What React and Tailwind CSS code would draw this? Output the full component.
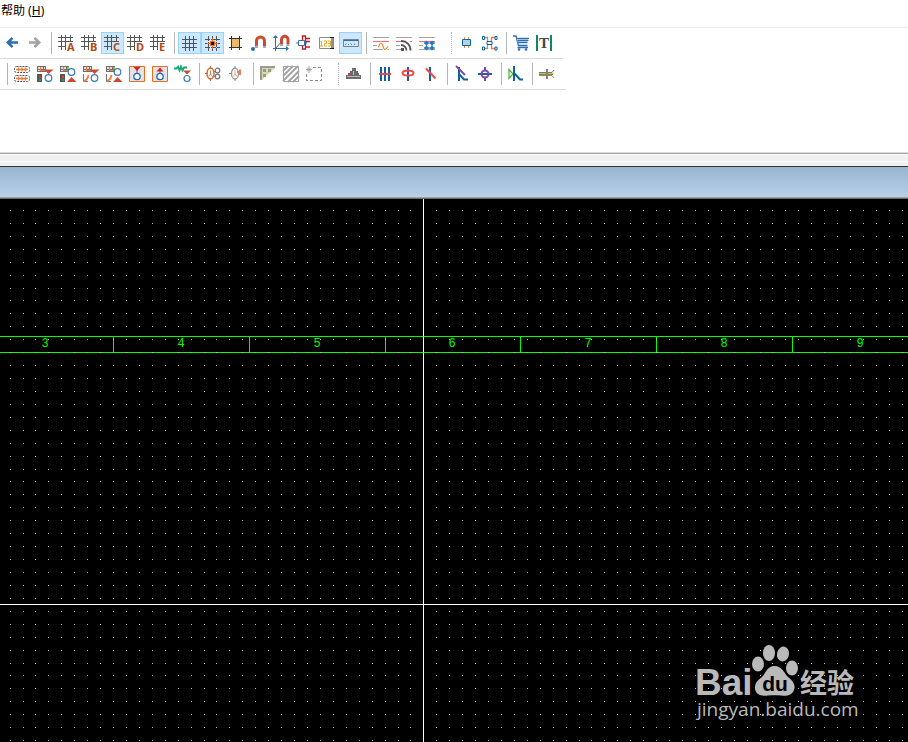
import React, { useState } from 'react';

const BLUE = '#0a62a5';
const RED = '#fb4444';
const BRICK = '#cc4b30';
const GREY = '#a3a3a3';
const ORANGE = '#f47a3a';

const Icon = ({ children }) => (
  <svg width="17" height="16" viewBox="0 0 17 16" fill="none" aria-hidden="true" className="block shrink-0 overflow-visible">
    {children}
  </svg>
);

// arrows
const Back = () => (
  <Icon>
    <path d="M14 7.5H5M8.5 2.8L3.8 7.5L8.5 12.2" stroke="#2f6fb0" strokeWidth="2.6" />
  </Icon>
);

const Forward = () => (
  <Icon>
    <path d="M2 7.5H11M7.5 2.8L12.2 7.5L7.5 12.2" stroke={GREY} strokeWidth="2.6" />
  </Icon>
);

// grids
const LetterGrid = ({ letter }) => (
  <Icon>
    <path d="M0 2.5H15M0 6.5H15M0 11.5H8M3.5 0V15M7.5 0V15M12.5 0V7" stroke="#555" shapeRendering="crispEdges" />
    <text x="9" y="16" fontSize="11" fontWeight="700" fontFamily="'Noto Sans', sans-serif" fill="#b5490f">{letter}</text>
  </Icon>
);

const Grid = () => (
  <Icon>
    <path d="M1 4.5H16M1 8.5H16M1 12.5H16M4.5 1V16M8.5 1V16M12.5 1V16" stroke="#4a5560" shapeRendering="crispEdges" />
  </Icon>
);

const SnapGrid = () => (
  <Icon>
    <g shapeRendering="crispEdges">
      <path d="M1 4.5H16M1 12.5H16M4.5 1V16M12.5 1V16M1 8.5H3M14 8.5H16M8.5 1V3M8.5 14V16" stroke="#4a5560" strokeDasharray="5 1" />
      <path d="M8 3h1v11H8zM3 8h11v1H3z" fill="#f4701e" />
      <path d="M6 6h5v5H6z" fill="#f4701e" />
      <path d="M7 7h3v3H7z" fill="#111" />
    </g>
  </Icon>
);

const Board = () => (
  <Icon>
    <path d="M4 4h9v9H4z" fill="#edb965" />
    <path d="M2 3.5H15M2 12.5H15M4.5 1V15M12.5 1V15" stroke="#333" shapeRendering="crispEdges" />
  </Icon>
);

// magnets
const Magnet = () => (
  <Icon>
    <path d="M6.5 11V6a4 4 0 0 1 8 0V11" stroke={BRICK} strokeWidth="3" />
    <path d="M5 11h3v2H5zM13 11h3v2h-3z" fill="#aaa" />
    <path d="M7 10L3 14" stroke="#8db4d6" strokeDasharray="1 1" />
    <circle cx="3" cy="14" r="2" fill="#2f6fb0" />
  </Icon>
);

const AxisMagnet = () => (
  <Icon>
    <path d="M2.5 2V16M0 13.5H14M3 13L9 6" stroke="#2f6fb0" />
    <path d="M0 3L2.5 0L5 3zM13 11L16 13.5L13 16z" fill="#2f6fb0" />
    <path d="M8.5 9V4.5a3 3 0 0 1 6.5 0V9" stroke={BRICK} strokeWidth="3" />
    <path d="M7 9h3v2H7zM13.5 9h3v2h-3z" fill="#aaa" />
  </Icon>
);

const Connector = () => (
  <Icon>
    <path d="M6.5 5V1H9.500V3.5H14M9 6.500H14M6.5 10V14H9.500V12H14M9.500 3V13" stroke="#c01c1c" strokeWidth="1.3" />
    <path d="M2.5 5.5h6v5h-6zM0 8H2M9 8H11" stroke="#2f6fb0" fill="#fff" />
  </Icon>
);

const Counter = () => (
  <Icon>
    <path d="M.5 2.5h14v11H.5z" stroke="#8a8a8a" />
    <path d="M1.500 6.500H2.500V11M1 11H4M5 6H7.500V8.500H5.500V11H8M9 6H11.500V11H9M9 8.500H11" stroke="#efa91c" />
    <path d="M11 2.5H15M13 2V14M11 13.5H15" stroke="#222" />
  </Icon>
);

const Panel = () => (
  <Icon>
    <path d="M1.5 4.5h15v7h-15z" fill="#cfe6fb" stroke="#77828c" />
    <path d="M2 5.5H16" stroke="#2f6fb0" />
    <path d="M3 9.5H15" stroke="#4f8cc8" strokeDasharray="1 2" />
    <path d="M4 8.5H14" stroke="#8dbbe4" strokeDasharray="1 3" />
  </Icon>
);

// net lines
const NetLines = () => (
  <g>
    <path d="M0 2.5H16M0 10.5H4M0 14.5H16" stroke={GREY} />
    <path d="M0 6.5H16" stroke="#f96464" />
  </g>
);

const Wave = () => (
  <Icon>
    <NetLines />
    <path d="M5 12C6.5 12 6 8 8 8S10 14.5 12 14.5S13.5 11.5 15.5 11.5" stroke="#fff" strokeWidth="3" />
    <path d="M5 12C6.5 12 6 8 8 8S10 14.5 12 14.5S13.5 11.5 15.5 11.5" stroke="#f0862c" strokeWidth="1.2" />
  </Icon>
);

const Signal = () => (
  <Icon>
    <NetLines />
    <path d="M5 5H10A6 6 0 0 1 16 11V16H5z" fill="#fff" />
    <path d="M5 6A9 9 0 0 1 14.5 15.5M5 10A5.5 5.5 0 0 1 10.5 15.5" stroke="#555" strokeWidth="1.8" />
    <path d="M5 13h3v3H5z" fill="#555" />
  </Icon>
);

const Nodes = () => (
  <Icon>
    <NetLines />
    <path d="M7.5 6V15M13 6V15M5 8H16M5 13H16" stroke="#2579bf" />
    <path d="M7.5 5.500L10 8L7.5 10.500L5 8zM13 5.500L15.500 8L13 10.500L10.500 8zM7.5 10.500L10 13L7.5 15.500L5 13zM13 10.500L15.500 13L13 15.500L10.500 13z" fill="#2579bf" />
  </Icon>
);

// parts
const Chip = () => (
  <Icon>
    <path d="M6.5 2V5M10.5 2V5M6.5 11V13M10.5 11V13" stroke="#ef8a3c" />
    <path d="M4.5 4.5h8v6h-8z" fill="#b5d3e6" stroke={BLUE} />
  </Icon>
);

const ChipNet = () => (
  <Icon>
    <path d="M3 2.5H6.5V6M14 2.5H10.5V6M3 13.5H6.5V10M14 13.5H10.5V10" stroke="#ef8036" strokeWidth="1.3" />
    <path d="M1.5 1.5h2v3h-2zM14 1.5h2v3h-2zM1.5 12h2v3h-2zM14 12h2v3h-2zM6 6.5h5v3H6z" stroke={BLUE} fill="#fff" />
  </Icon>
);

const Cart = () => (
  <Icon>
    <path d="M0 1H3L5.5 10.5H14.5M4.500 12.5H15" stroke="#2f6fb0" strokeWidth="1.4" />
    <path d="M3.5 2.500H16L14 8.500H5z" fill="#a4c2e0" />
    <path d="M3.500 3.500H16M4.5 5.500H15.500M5 7.500H14.5" stroke="#2f6fb0" />
    <circle cx="6" cy="14.5" r="1.3" fill="#2f6fb0" />
    <circle cx="13" cy="14.5" r="1.3" fill="#2f6fb0" />
  </Icon>
);

const TextBars = () => (
  <Icon>
    <path d="M0 0h2v16H0zM14 0h2v16h-2z" fill="#12875a" />
    <text x="8" y="13" textAnchor="middle" fontSize="15" fontWeight="700" fontFamily="'Liberation Serif', serif" fill="#444">T</text>
  </Icon>
);

// second row, built from a few small pieces
const Table = () => (
  <g shapeRendering="crispEdges">
    <path d="M1 0h9v6H1z" fill="#6f6f6f" />
    <path d="M2 1h2v2H2zM5 1h2v2H5zM8 1h1v2H8zM2 4h2v1H2z" fill="#e8dcd4" />
    <path d="M5 4h5v1H5zM4 1h1v4H4z" fill={ORANGE} />
  </g>
);

const Lights = () => (
  <g shapeRendering="crispEdges">
    <path d="M1 8h5v8H1z" fill="#555" />
    <path d="M3 10h2v2H3z" fill="#f03a2a" />
    <path d="M3 13h2v2H3z" fill="#12a55b" />
  </g>
);

const Swoosh = () => (
  <g>
    <path d="M1.5 8V15.5H6" stroke="#777" />
    <path d="M2 15C5 14 6 12 6.5 9" stroke={ORANGE} strokeWidth="1.8" />
  </g>
);

const DownLow = () => (
  <g>
    <path d="M8 3.5H17.500L12.5 8z" fill={BRICK} />
    <circle cx="12.5" cy="12" r="3.3" stroke="#3a7ab8" strokeWidth="1.2" fill="#fff" />
  </g>
);

const UpLow = () => (
  <g>
    <path d="M8 1h2v2H8z" fill="#7fd42a" />
    <circle cx="12.5" cy="6" r="3.3" stroke="#3a7ab8" strokeWidth="1.2" fill="#fff" />
    <path d="M8 16H17.500L12.5 11z" fill={BRICK} />
  </g>
);

const Pads = () => (
  <Icon>
    {[3.5, 12.5].map((y) => (
      <g key={y}>
        <rect x="1.5" y={y - 3} width="15" height="6" rx="2" stroke="#555" strokeDasharray="2 1" />
        <path d={`M3 ${y}H15M5.5 ${y - 2}V${y + 2}M9 ${y - 2}V${y + 2}M12.5 ${y - 2}V${y + 2}`} stroke="#ee7a3c" strokeWidth="1.3" />
      </g>
    ))}
  </Icon>
);

const TableLightsDown = () => <Icon><Table /><Lights /><DownLow /></Icon>;
const TableLightsUp = () => <Icon><Table /><Lights /><UpLow /></Icon>;
const TableSwooshDown = () => <Icon><Table /><Swoosh /><DownLow /></Icon>;
const TableSwooshUp = () => <Icon><Table /><Swoosh /><UpLow /></Icon>;

const FramedDown = () => (
  <Icon>
    <path d="M1.5 .5h15v15h-15z" fill="#e4e4e4" stroke="#f26a1b" />
    <path d="M5.5 1H12.5L9 5z" fill="#cc2430" />
    <path d="M9 4V7" stroke="#cc2430" />
    <circle cx="9" cy="10.5" r="3.2" stroke="#1f66c0" strokeWidth="1.3" fill="#fff" />
  </Icon>
);

const FramedUp = () => (
  <Icon>
    <path d="M1.5 .5h15v15h-15z" fill="#e4e4e4" stroke="#f26a1b" />
    <path d="M5.5 5.5H12.5L9 1.5z" fill="#cc2430" />
    <path d="M9 5V7" stroke="#cc2430" />
    <circle cx="9" cy="10.5" r="3.2" stroke="#1f66c0" strokeWidth="1.3" fill="#fff" />
  </Icon>
);

const ZigZag = () => (
  <Icon>
    <path d="M0 2.5H2.500L4 0.500L5.500 4.500L7 0.500L8.500 4.500L10 1.500H13" stroke="#12a874" strokeWidth="1.8" />
    <path d="M9 4.5H17L13 8.5z" fill={BRICK} />
    <circle cx="13" cy="12.5" r="3" stroke="#3a7ab8" strokeWidth="1.2" />
  </Icon>
);

const Coil = () => (
  <Icon>
    <path d="M0 7.5H3M9 5.5H10M9 10.5H10M5.5 0V3M5.5 12V15" stroke="#777" />
    <ellipse cx="5.5" cy="7.5" rx="3.5" ry="5.5" stroke="#e0692b" strokeWidth="1.5" />
    <path d="M5.5 4.5V8M3.5 10.5L5.5 8L7.5 10.5" stroke={ORANGE} />
    <circle cx="12.5" cy="4.5" r="2.3" stroke="#777" strokeWidth="1.2" />
    <circle cx="12.5" cy="10.5" r="2.3" stroke="#777" strokeWidth="1.2" />
  </Icon>
);

const CoilPin = () => (
  <Icon>
    <path d="M1 7.5H4M10 6.5H12M7 0V2M7 13V15" stroke="#888" />
    <ellipse cx="7" cy="7.5" rx="3.5" ry="5.5" stroke="#999" strokeWidth="1.3" />
    <path d="M7 4.5V8M5 10.5L7 8L9 10.5" stroke="#f0a080" />
    <path d="M9 5h2V3.500h2V9h-2V7H9z" fill="#f27b5c" />
  </Icon>
);

const CornerTable = () => (
  <Icon>
    <path d="M1 0H16V2L12 6L7 10L3 14H1z" fill="#d8dba6" />
    <path d="M1 0h15v2H1zM1 0h2v14H1z" fill="#9a9a9a" />
    <path d="M4 3h3v3H4zM9 3h3v3H9zM4 8h3v3H4z" fill="#9a9a9a" />
  </Icon>
);

const Hatch = () => (
  <Icon>
    <path d="M1.5 .5h15v15h-15z" stroke={GREY} />
    <path d="M1 5L6 0M1 10L11 0M1 15L16 0M6 16L17 5M11 16L17 10" stroke={GREY} strokeWidth="2" />
  </Icon>
);

const NewArea = () => (
  <Icon>
    <path d="M4 0V7M1 3.5H7M2 1.5L6 5.5M6 1.5L2 5.5" stroke={GREY} />
    <path d="M8 1.5H16.5V14.5H1.5V8" stroke="#8c8c8c" strokeDasharray="3 2" />
  </Icon>
);

const Dome = () => (
  <Icon>
    <path d="M7 2h4v3H7zM5 5h8v2H5zM3 7h11v2H3zM1 9h15v4H1z" fill="#6b6b6b" />
    <path d="M2 10.5H15" stroke="#bbb" />
    <path d="M8.5 5V9" stroke="#bbb" />
    <path d="M4 7h2v2H4z" fill="#e03a2e" />
  </Icon>
);

const ThreeBars = () => (
  <Icon>
    <path d="M5 1V15M9 1V15M13 1V15" stroke={BLUE} strokeWidth="2" />
    <path d="M3 8H15" stroke={RED} strokeWidth="2" />
  </Icon>
);

const Loop = () => (
  <Icon>
    <path d="M9 1V15" stroke={BLUE} strokeWidth="2" />
    <ellipse cx="9" cy="7" rx="5.5" ry="2.5" stroke={RED} strokeWidth="2" />
  </Icon>
);

const Slash = () => (
  <Icon>
    <path d="M8 1V15" stroke={BLUE} strokeWidth="2" />
    <path d="M4 2.5L13.5 12.5" stroke={RED} strokeWidth="2" />
  </Icon>
);

const PurpleBranch = () => (
  <Icon>
    <path d="M6 1V15M6 8L11 13.5H15" stroke={BLUE} strokeWidth="2" />
    <path d="M3 0L12 9" stroke="#8048a8" strokeWidth="2" />
  </Icon>
);

const PurpleNode = () => (
  <Icon>
    <path d="M2 8H16" stroke={BLUE} strokeWidth="2" />
    <circle cx="9" cy="8" r="3.5" stroke="#8048a8" strokeWidth="2" />
    <path d="M9 1V5M9 11V15" stroke="#8048a8" strokeWidth="2" />
  </Icon>
);

const Branch = () => (
  <Icon>
    <path d="M2 3.500L6 8L2 12.500z" stroke="#42b52e" strokeWidth="1.2" />
    <path d="M7 0V15M7 7L13 13.5H16" stroke={BLUE} strokeWidth="2" />
  </Icon>
);

const Rainbow = () => (
  <Icon>
    <path d="M1 6.5H14L16 4" stroke="#3a86d0" />
    <path d="M1 7.5H15" stroke="#f5b81c" />
    <path d="M1 8.5H15" stroke="#3aaa4c" />
    <path d="M1 9.5H14L16 12" stroke="#e0702c" />
    <path d="M9 3V13" stroke="#8f8080" strokeWidth="2" />
  </Icon>
);

const topRow = [
  [
    { id: 'back', label: 'Back', icon: <Back /> },
    { id: 'forward', label: 'Forward', icon: <Forward /> },
  ],
  ['A', 'B', 'C', 'D', 'E'].map((letter) => ({
    id: `grid-${letter}`,
    label: `Grid ${letter}`,
    icon: <LetterGrid letter={letter} />,
  })),
  [
    { id: 'grid', label: 'Show grid', icon: <Grid /> },
    { id: 'snap', label: 'Snap to grid', icon: <SnapGrid /> },
    { id: 'board', label: 'Outline', icon: <Board /> },
    { id: 'magnet', label: 'Object snap', icon: <Magnet /> },
    { id: 'axis', label: 'Axis snap', icon: <AxisMagnet /> },
    { id: 'connector', label: 'Connector', icon: <Connector /> },
    { id: 'counter', label: 'Numbering', icon: <Counter /> },
    { id: 'panel', label: 'Panel', icon: <Panel /> },
  ],
  [
    { id: 'wave', label: 'Waveform', icon: <Wave /> },
    { id: 'signal', label: 'Signal', icon: <Signal /> },
    { id: 'nodes', label: 'Nodes', icon: <Nodes /> },
  ],
  [
    { id: 'chip', label: 'Chip', icon: <Chip /> },
    { id: 'chipnet', label: 'Chip net', icon: <ChipNet /> },
  ],
  [
    { id: 'cart', label: 'Order parts', icon: <Cart /> },
    { id: 'text', label: 'Text', icon: <TextBars /> },
  ],
];

const bottomRow = [
  [
    { id: 'pads', label: 'Pads', icon: <Pads /> },
    { id: 'tld', label: 'Import table', icon: <TableLightsDown /> },
    { id: 'tlu', label: 'Export table', icon: <TableLightsUp /> },
    { id: 'tsd', label: 'Import curve', icon: <TableSwooshDown /> },
    { id: 'tsu', label: 'Export curve', icon: <TableSwooshUp /> },
    { id: 'fd', label: 'Step down', icon: <FramedDown /> },
    { id: 'fu', label: 'Step up', icon: <FramedUp /> },
    { id: 'zigzag', label: 'Resistor', icon: <ZigZag /> },
  ],
  [
    { id: 'coil', label: 'Coil', icon: <Coil /> },
    { id: 'coilpin', label: 'Coil pin', icon: <CoilPin /> },
  ],
  [
    { id: 'corner', label: 'Corner table', icon: <CornerTable /> },
    { id: 'hatch', label: 'Hatch', icon: <Hatch /> },
    { id: 'area', label: 'New area', icon: <NewArea /> },
  ],
  [{ id: 'dome', label: 'Plate', icon: <Dome /> }],
  [
    { id: 'bars', label: 'Bus', icon: <ThreeBars /> },
    { id: 'loop', label: 'Loop', icon: <Loop /> },
    { id: 'slash', label: 'Cut', icon: <Slash /> },
  ],
  [
    { id: 'pbranch', label: 'Tap', icon: <PurpleBranch /> },
    { id: 'pnode', label: 'Node', icon: <PurpleNode /> },
  ],
  [{ id: 'branch', label: 'Branch', icon: <Branch /> }],
  [{ id: 'rainbow', label: 'Cable', icon: <Rainbow /> }],
];

const Toolbar = ({ label, groups, active, onToggle, separators, className }) => (
  <div role="toolbar" aria-label={label} className={`flex w-fit items-center border-b border-[#dadada] py-1 ${className}`}>
    {groups.map((group, i) => (
      <React.Fragment key={i}>
        {separators[i] && <span className={`h-[22px] border-l ${separators[i]}`} />}
        {group.map((tool) => (
          <button
            key={tool.id}
            type="button"
            title={tool.label}
            aria-label={tool.label}
            aria-pressed={active.includes(tool.id)}
            onClick={() => onToggle(tool.id)}
            className={`flex h-[22px] w-[23px] shrink-0 items-center justify-center ${
              active.includes(tool.id) ? 'bg-[#cce8ff] outline outline-1 -outline-offset-1 outline-[#99d1ff]' : 'hover:bg-[#e5f3ff]'
            }`}
          >
            {tool.icon}
          </button>
        ))}
      </React.Fragment>
    ))}
  </div>
);

const solidTop = 'ml-1 mr-[3px] border-[#b4b4b4]';
const dottedTop = 'ml-3 mr-[3px] border-dotted border-[#b4b4b4]';
const solidBottom = 'ml-[5px] mr-[2px] border-[#b4b4b4]';
const dottedBottom = 'ml-[13px] mr-[3px] border-dotted border-[#b4b4b4]';

const STEP = 12.93;
const COLS = 200;
const ROWS = 120;

// one path for all grid points, each snapped to a whole pixel
const buildDots = () => {
  let d = '';
  for (let r = 0; r < ROWS; r++) {
    const y = Math.floor(11.45 + r * STEP);
    for (let c = 0; c < COLS; c++) {
      d += `M${Math.floor(10.1 + c * STEP)} ${y}h1v1h-1z`;
    }
  }
  return d;
};

const dots = buildDots();

const zones = [3, 4, 5, 6, 7, 8, 9].map((number, i) => ({
  number,
  end: Math.round(113.2 + i * 135.75),
}));

const DrawingSheet = () => (
  <svg className="absolute inset-0 h-full w-full" shapeRendering="crispEdges" aria-label="Drawing sheet">
    <rect y="137" width="100%" height="1" fill="#00ff00" />
    <rect y="153" width="100%" height="1" fill="#00ff00" />
    {zones.map((zone) => (
      <g key={zone.number} fill="#00ff00">
        <rect x={zone.end} y="137" width="1" height="16" />
        <text x={zone.end - 68} y="148" textAnchor="middle" fontSize="12" fontFamily="'Liberation Mono', monospace">
          {zone.number}
        </text>
      </g>
    ))}
    <path d={dots} fill="#c0c0c0" />
    <rect x="423" width="1" height="100%" fill="#fff" />
    <rect y="405" width="100%" height="1" fill="#fff" />
  </svg>
);

const Watermark = () => (
  <svg width="166" height="82" viewBox="0 0 166 82" className="absolute right-[47px] bottom-[18px]" fill="#b9b9b9">
    <text x="0" y="53" fontSize="37" fontWeight="700" fontFamily="'Liberation Sans', sans-serif">Bai</text>
    <ellipse cx="63" cy="22" rx="6" ry="7.5" />
    <ellipse cx="74" cy="11" rx="6" ry="8" />
    <ellipse cx="88" cy="12" rx="6" ry="7.5" transform="rotate(12 88 12)" />
    <ellipse cx="97" cy="26" rx="6" ry="7.5" />
    <path d="M79.5 24C87 24 89 31 93 35C98 39 101 43 99 48C97 54 91 54 86 53.5C81 53 78 53 73 53.5C67 54.5 61 53 60 47C59.5 41 63 38 67 35C71 31 72 24 79.5 24z" />
    <text x="80" y="49" textAnchor="middle" fontSize="21" fontWeight="700" fontFamily="'Liberation Sans', sans-serif" fill="#000">du</text>
    <text x="105" y="51" fontSize="27" fontWeight="700" fontFamily="'Noto Sans CJK SC', sans-serif">经验</text>
    <text x="2" y="74" fontSize="19" fontWeight="500" fontFamily="'Open Sans', sans-serif">jingyan.baidu.com</text>
  </svg>
);

const App = () => {
  const [active, setActive] = useState(['grid-C', 'grid', 'snap', 'panel']);

  const toggle = (id) => {
    setActive((prev) => (prev.includes(id) ? prev.filter((item) => item !== id) : [...prev, id]));
  };

  return (
    <div className="flex min-h-screen flex-col bg-white font-['Noto_Sans','Noto_Sans_CJK_SC',sans-serif] text-black">
      <nav className="flex h-7 items-start border-b border-[#ececec] pl-px">
        <button type="button" className="h-[22px] whitespace-pre text-xs">
          帮助 (<u>H</u>)
        </button>
      </nav>

      <div className="h-[124px]">
        <Toolbar
          label="Grid and snap"
          groups={topRow}
          active={active}
          onToggle={toggle}
          separators={[null, solidTop, solidTop, solidTop, dottedTop, 'ml-[5px] mr-[3px] border-[#b4b4b4]']}
          className="pr-[7px] pl-px"
        />
        <Toolbar
          label="Editing"
          groups={bottomRow}
          active={active}
          onToggle={toggle}
          separators={['ml-[7px] mr-[2px] border-[#b4b4b4]', solidBottom, solidBottom, dottedBottom, solidBottom, solidBottom, solidBottom, solidBottom]}
          className="pr-2"
        />
      </div>

      <div className="border-t border-[#dcdcdc]">
        <div className="border-t border-[#a0a0a0] pt-px">
          <div className="h-1.5 bg-[#f0f0f0]" />
          <div className="mt-px h-1 bg-[#f0f0f0]" />
        </div>
      </div>
      <div className="h-[33px] border-t border-b border-t-[#333] border-b-[#696969] bg-linear-to-b from-[#99b4d1] to-[#b9d1ea]">
        <div className="h-full border-b border-[#a0a0a0]" />
      </div>

      <main className="relative flex-1 overflow-hidden bg-black">
        <DrawingSheet />
        <Watermark />
      </main>
    </div>
  );
};

export default App;
